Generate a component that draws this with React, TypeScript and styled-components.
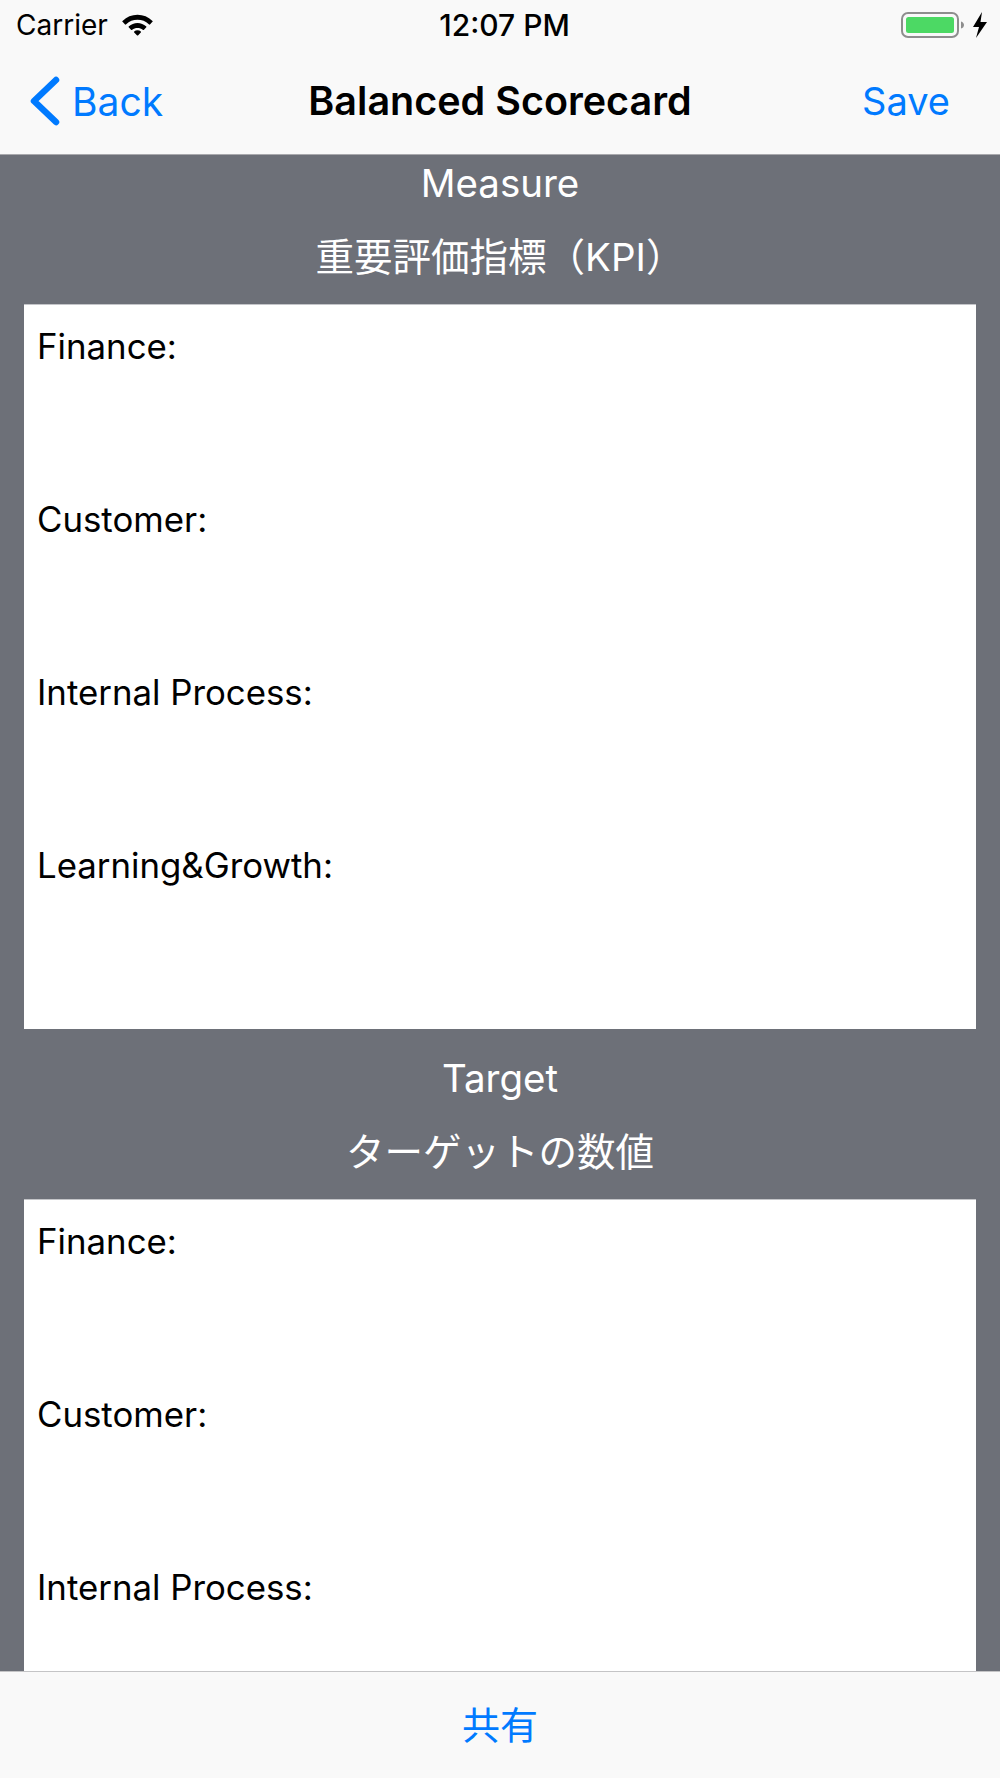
import styled, { createGlobalStyle } from "styled-components"

const GlobalStyle = createGlobalStyle`
  html, body {
    margin: 0;
    padding: 0;
    background: #f9f9f9;
  }
  * {
    box-sizing: border-box;
  }
`

const Screen = styled.div`
  width: 1000px;
  height: 1778px;
  display: flex;
  flex-direction: column;
  overflow: hidden;
  font-family: Inter, "Noto Sans CJK JP", sans-serif;
`

const Header = styled.header`
  flex: none;
  height: 155px;
  background: #f9f9f9;
  border-bottom: 1px solid #a9a9ad;
`

const StatusBar = styled.div`
  height: 50px;
  padding: 0 16px;
  display: flex;
  align-items: center;
  justify-content: space-between;
  position: relative;
  color: #000;
`

const StatusLeft = styled.div`
  display: flex;
  align-items: center;
  gap: 12px;
  font-size: 28px;
`

const Clock = styled.div`
  font-size: 30px;
  font-weight: 500;
  position: absolute;
  left: 0;
  right: 0;
  padding-left: 9px;
  text-align: center;
`

const StatusRight = styled.div`
  display: flex;
  align-items: center;
  gap: 7px;
  margin-right: -4px;
`

const NavBar = styled.nav`
  height: 102px;
  display: grid;
  grid-template-columns: 1fr auto 1fr;
  align-items: center;
  padding: 0 50px 0 30px;
`

const BackLink = styled.div`
  display: flex;
  align-items: center;
  gap: 12px;
  color: #007aff;
  font-size: 39px;
`

const Title = styled.div`
  font-size: 39.500px;
  font-weight: 600;
  color: #000;
  margin-left: 20px;
`

const SaveLink = styled.div`
  justify-self: end;
  color: #007aff;
  font-size: 38px;
`

const Main = styled.main`
  flex: 1;
  min-height: 0;
  overflow: hidden;
  background: #6d7078;
  padding: 0 24px;
`

const SectionHeading = styled.div`
  height: 149px;
  display: flex;
  flex-direction: column;
  align-items: center;
  gap: 15px;
  color: #fff;
  font-size: 38.500px;
`

const HeadingLine = styled.div`
  height: 56px;
  display: flex;
  align-items: center;
`

const Card = styled.section`
  height: 725px;
  background: #fff;
  padding: 0 13px;
  margin-bottom: 21px;
  border-top: 1px solid #c4c5c9;
`

const Field = styled.div`
  height: 173px;
  padding-top: 21px;
  color: #000;
  font-size: 34.800px;
  line-height: 40px;
`

const Toolbar = styled.footer`
  flex: none;
  height: 107px;
  padding-bottom: 6px;
  background: #f9f9f9;
  border-top: 1px solid #c4c4c6;
  display: flex;
  align-items: center;
  justify-content: center;
  color: #007aff;
  font-size: 38px;
`

const WifiIcon = () => (
  <svg width="35" height="26" viewBox="0 0 34 24" fill="#000">
    <path d="M17 2c5.600 0 10.600 2.200 14.300 5.800 .7.7 .7.7 0 1.400l-2 2.100c-.5.500-.8.500-1.300 0C25 8.400 21.200 7 17 7s-8 1.400-11 4.300c-.5.500-.8.500-1.300 0l-2-2.100c-.7-.7-.7-.7 0-1.400C6.400 4.200 11.400 2 17 2z" />
    <path d="M17 10c3.200 0 6.100 1.200 8.300 3.300 .5.500 .5.700 0 1.200l-2 2c-.4.400-.7.400-1.200 0-1.400-1.100-3.100-1.700-5.100-1.700s-3.700.6-5.100 1.700c-.5.400-.8.400-1.200 0l-2-2c-.5-.5-.5-.7 0-1.200C10.900 11.200 13.800 10 17 10z" />
    <path d="M17 17.200c1.300 0 2.400.4 3.200 1.100 .4.400 .4.600 0 1L17.700 22c-.4.400-.9.400-1.300 0l-2.600-2.700c-.4-.4-.4-.6 0-1 .8-.7 1.900-1.100 3.200-1.100z" />
  </svg>
)

const BatteryIcon = () => (
  <svg width="64" height="28" viewBox="0 0 64 28">
    <rect x="1" y="2" width="56" height="24" rx="6" fill="none" stroke="#8e8e8e" strokeWidth="2" />
    <rect x="5" y="6" width="48" height="16" rx="2.500" fill="#4cd964" />
    <path d="M60 10.500c2 .5 3 2 3 3.500s-1 3-3 3.500z" fill="#8e8e8e" />
  </svg>
)

const BoltIcon = () => (
  <svg width="16" height="26" viewBox="0 0 16 26" fill="#000">
    <path d="M10 0 1 15h6l-3 11 11-16H8.500z" />
  </svg>
)

const BackChevron = () => (
  <svg width="30" height="50" viewBox="0 0 30 50" fill="none" stroke="#007aff" strokeWidth="6.500" strokeLinecap="round" strokeLinejoin="round">
    <path d="M26 4 4 25l22 21" />
  </svg>
)

const ScoreSection = ({ title, subtitle, fields }: { title: string; subtitle: string; fields: string[] }) => (
  <>
    <SectionHeading>
      <HeadingLine>{title}</HeadingLine>
      <HeadingLine>{subtitle}</HeadingLine>
    </SectionHeading>
    <Card>
      {fields.map((f) => (
        <Field key={f}>{f}</Field>
      ))}
    </Card>
  </>
)

const measureFields = ["Finance:", "Customer:", "Internal Process:", "Learning&Growth:"]
const targetFields = ["Finance:", "Customer:", "Internal Process:"]

export default function App() {
  return (
    <Screen>
      <GlobalStyle />
      <Header>
        <StatusBar>
          <StatusLeft>
            Carrier
            <WifiIcon />
          </StatusLeft>
          <Clock>12:07 PM</Clock>
          <StatusRight>
            <BatteryIcon />
            <BoltIcon />
          </StatusRight>
        </StatusBar>
        <NavBar>
          <BackLink>
            <BackChevron />
            Back
          </BackLink>
          <Title>Balanced Scorecard</Title>
          <SaveLink>Save</SaveLink>
        </NavBar>
      </Header>
      <Main>
        <ScoreSection title="Measure" subtitle="重要評価指標（KPI）" fields={measureFields} />
        <ScoreSection title="Target" subtitle="ターゲットの数値" fields={targetFields} />
      </Main>
      <Toolbar>共有</Toolbar>
    </Screen>
  )
}
